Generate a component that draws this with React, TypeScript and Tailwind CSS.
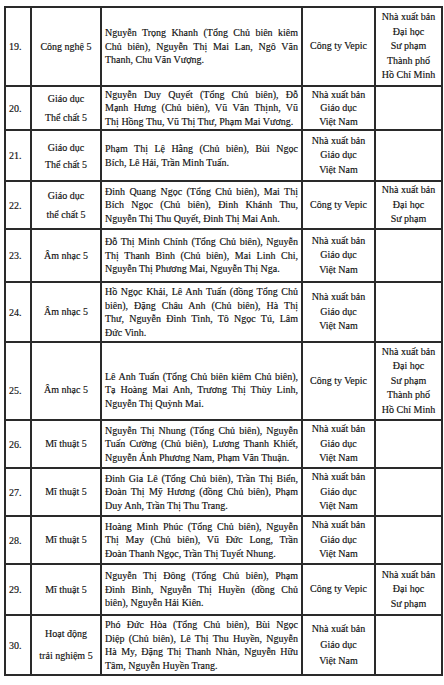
import React from 'react';

type Row = {
  no: string;
  subject: string[];
  authors: string[];
  publisher: string[];
  partner: string[];
  h: number;
  sub?: string;
  pub?: string;
  low?: boolean;
};

const NXB_GD = ['Nhà xuất bản', 'Giáo dục', 'Việt Nam'];
const VEPIC = ['Công ty Vepic'];
const SP_HCM = ['Nhà xuất bản', 'Đại học', 'Sư phạm', 'Thành phố', 'Hồ Chí Minh'];
const SP = ['Nhà xuất bản', 'Đại học', 'Sư phạm'];

const rows: Row[] = [
  {
    no: '19.',
    subject: ['Công nghệ 5'],
    authors: [
      'Nguyễn Trọng Khanh (Tổng Chủ biên kiêm',
      'Chủ biên), Nguyễn Thị Mai Lan, Ngô Văn',
      'Thanh, Chu Văn Vượng.',
    ],
    publisher: VEPIC,
    partner: SP_HCM,
    h: 79,
  },
  {
    no: '20.',
    subject: ['Giáo dục', 'Thể chất 5'],
    authors: [
      'Nguyễn Duy Quyết (Tổng Chủ biên), Đỗ',
      'Mạnh Hưng (Chủ biên), Vũ Văn Thịnh, Vũ',
      'Thị Hồng Thu, Vũ Thị Thư, Phạm Mai Vương.',
    ],
    publisher: NXB_GD,
    partner: [],
    h: 44,
    sub: 'leading-[19px]',
    pub: 'leading-[13.5px]',
  },
  {
    no: '21.',
    subject: ['Giáo dục', 'Thể chất 5'],
    authors: ['Phạm Thị Lệ Hằng (Chủ biên), Bùi Ngọc', 'Bích, Lê Hải, Trần Minh Tuấn.'],
    publisher: NXB_GD,
    partner: [],
    h: 51,
    sub: 'leading-[17px]',
  },
  {
    no: '22.',
    subject: ['Giáo dục', 'thể chất 5'],
    authors: [
      'Đinh Quang Ngọc (Tổng Chủ biên), Mai Thị',
      'Bích Ngọc (Chủ biên), Đinh Khánh Thu,',
      'Nguyễn Thị Thu Quyết, Đinh Thị Mai Anh.',
    ],
    publisher: VEPIC,
    partner: SP,
    h: 48,
    sub: 'leading-[19px]',
  },
  {
    no: '23.',
    subject: ['Âm nhạc 5'],
    authors: [
      'Đỗ Thị Minh Chính (Tổng Chủ biên), Nguyễn',
      'Thị Thanh Bình (Chủ biên), Mai Linh Chi,',
      'Nguyễn Thị Phương Mai, Nguyễn Thị Nga.',
    ],
    publisher: NXB_GD,
    partner: [],
    h: 53,
  },
  {
    no: '24.',
    subject: ['Âm nhạc 5'],
    authors: [
      'Hồ Ngọc Khải, Lê Anh Tuấn (đồng Tổng Chủ',
      'biên), Đặng Châu Anh (Chủ biên), Hà Thị',
      'Thư, Nguyễn Đình Tình, Tô Ngọc Tú, Lâm',
      'Đức Vinh.',
    ],
    publisher: NXB_GD,
    partner: [],
    h: 60,
  },
  {
    no: '25.',
    subject: ['Âm nhạc 5'],
    authors: [
      'Lê Anh Tuấn (Tổng Chủ biên kiêm Chủ biên),',
      'Tạ Hoàng Mai Anh, Trương Thị Thùy Linh,',
      'Nguyễn Thị Quỳnh Mai.',
    ],
    publisher: VEPIC,
    partner: SP_HCM,
    h: 78,
    low: true,
  },
  {
    no: '26.',
    subject: ['Mĩ thuật 5'],
    authors: [
      'Nguyễn Thị Nhung (Tổng Chủ biên), Nguyễn',
      'Tuấn Cường (Chủ biên), Lương Thanh Khiết,',
      'Nguyễn Ánh Phương Nam, Phạm Văn Thuận.',
    ],
    publisher: NXB_GD,
    partner: [],
    h: 48,
  },
  {
    no: '27.',
    subject: ['Mĩ thuật 5'],
    authors: [
      'Đinh Gia Lê (Tổng Chủ biên), Trần Thị Biển,',
      'Đoàn Thị Mỹ Hương (đồng Chủ biên), Phạm',
      'Duy Anh, Trần Thị Thu Trang.',
    ],
    publisher: NXB_GD,
    partner: [],
    h: 48,
  },
  {
    no: '28.',
    subject: ['Mĩ thuật 5'],
    authors: [
      'Hoàng Minh Phúc (Tổng Chủ biên), Nguyễn',
      'Thị May (Chủ biên), Vũ Đức Long, Trần',
      'Đoàn Thanh Ngọc, Trần Thị Tuyết Nhung.',
    ],
    publisher: NXB_GD,
    partner: [],
    h: 48,
  },
  {
    no: '29.',
    subject: ['Mĩ thuật 5'],
    authors: [
      'Nguyễn Thị Đông (Tổng Chủ biên), Phạm',
      'Đình Bình, Nguyễn Thị Huyền (đồng Chủ',
      'biên), Nguyễn Hải Kiên.',
    ],
    publisher: VEPIC,
    partner: SP,
    h: 51,
  },
  {
    no: '30.',
    subject: ['Hoạt động', 'trải nghiệm 5'],
    authors: [
      'Phó Đức Hòa (Tổng Chủ biên), Bùi Ngọc',
      'Diệp (Chủ biên), Lê Thị Thu Huyền, Nguyễn',
      'Hà My, Đặng Thị Thanh Nhàn, Nguyễn Hữu',
      'Tâm, Nguyễn Huyền Trang.',
    ],
    publisher: NXB_GD,
    partner: [],
    h: 60,
    sub: 'leading-[22px]',
    pub: 'leading-[16px]',
  },
];

const cell = 'border-2 border-[#2a2a2a] align-middle';

function Lines({ lines, className }: { lines: string[]; className: string }) {
  return (
    <div className={className}>
      {lines.map((l, i) => (
        <div key={i}>{l}</div>
      ))}
    </div>
  );
}

export default function App() {
  return (
    <div className="min-h-[685px] w-[444px] bg-white pt-[6px] pl-[4px] text-[#0f0f0f] font-['Liberation_Serif',serif] text-[10px] [-webkit-text-stroke:0.15px_#0f0f0f]">
      <table className="w-[437px] table-fixed border-collapse">
        <colgroup>
          <col className="w-[26px]" />
          <col className="w-[70px]" />
          <col className="w-[201px]" />
          <col className="w-[73px]" />
          <col className="w-[67px]" />
        </colgroup>
        <tbody>
          {rows.map((r) => {
            const shift = r.low ? 'pt-[18px]' : '';
            return (
              <tr key={r.no} style={{ height: r.h }}>
                <td className={`${cell} pl-[3px] ${shift}`}>{r.no}</td>
                <td className={`${cell} text-center ${shift}`}>
                  <Lines lines={r.subject} className={r.sub ?? 'leading-[16px]'} />
                </td>
                <td className={`${cell} px-[3px] ${shift}`}>
                  <div className="leading-[13.5px]">
                    {r.authors.map((l, i) => (
                      <div
                        key={i}
                        className={
                          i < r.authors.length - 1
                            ? 'whitespace-nowrap text-justify [text-align-last:justify]'
                            : 'whitespace-nowrap'
                        }
                      >
                        {l}
                      </div>
                    ))}
                  </div>
                </td>
                <td className={`${cell} text-center`}>
                  <Lines lines={r.publisher} className={r.pub ?? 'leading-[14.5px]'} />
                </td>
                <td className={`${cell} text-center`}>
                  <Lines lines={r.partner} className="leading-[14.5px]" />
                </td>
              </tr>
            );
          })}
        </tbody>
      </table>
    </div>
  );
}
